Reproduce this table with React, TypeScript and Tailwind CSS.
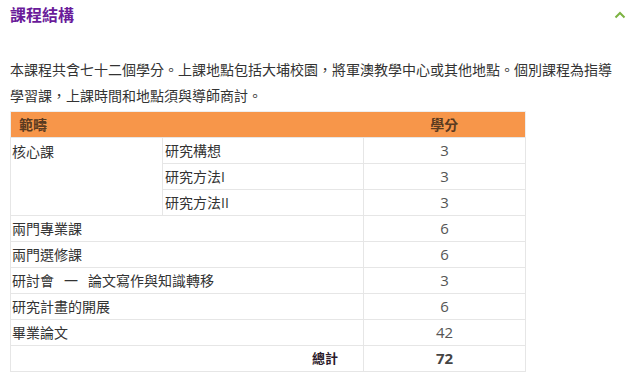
import React from "react";

const font = { fontFamily: '"Open Sans", "Noto Sans CJK TC", sans-serif' };

export default function App() {
  const cell = "border border-[#e6e6e6] h-[26px] p-0 align-middle";
  const num = `${cell} text-center text-[#555] text-[15px]`;
  return (
    <div className="w-[635px] h-[379px] bg-white text-[#333] overflow-hidden" style={font}>
      <div className="h-[30px] flex items-center justify-between pl-[10px] pr-[8px]">
        <h2 className="text-[16px] font-bold text-[#6a1b9a] leading-none">課程結構</h2>
        <svg width="12" height="8" viewBox="0 0 12 8" className="mr-[1px]">
          <path d="M1.5 6.5 L6 2 L10.5 6.5" fill="none" stroke="#7cb342" strokeWidth="2" />
        </svg>
      </div>
      <p className="mt-[27px] pl-[10px] pr-[10px] text-[14px] leading-[26px] text-[#333]">
        本課程共含七十二個學分。上課地點包括大埔校園，將軍澳教學中心或其他地點。個別課程為指導學習課，上課時間和地點須與導師商討。
      </p>
      <table className="ml-[10px] mt-[2px] w-[515px] table-fixed border-collapse text-[14px] border border-[#eeeeee]">
        <colgroup>
          <col className="w-[152px]" />
          <col className="w-[201px]" />
          <col className="w-[162px]" />
        </colgroup>
        <thead>
          <tr className="bg-[#f7964a] h-[26px]">
            <th colSpan={2} className="text-left pl-[8px] font-bold text-[#5a3a20]">範疇</th>
            <th className="text-center font-bold text-[#5a3a20]">學分</th>
          </tr>
        </thead>
        <tbody>
          <tr>
            <td rowSpan={3} className={`${cell} align-top pl-[1px] pt-[3px]`}>核心課</td>
            <td className={`${cell} pl-[2px]`}>研究構想</td>
            <td className={num}>3</td>
          </tr>
          <tr>
            <td className={`${cell} pl-[2px]`}>研究方法I</td>
            <td className={num}>3</td>
          </tr>
          <tr>
            <td className={`${cell} pl-[2px]`}>研究方法II</td>
            <td className={num}>3</td>
          </tr>
          <tr>
            <td colSpan={2} className={`${cell} pl-[1px]`}>兩門專業課</td>
            <td className={num}>6</td>
          </tr>
          <tr>
            <td colSpan={2} className={`${cell} pl-[1px]`}>兩門選修課</td>
            <td className={num}>6</td>
          </tr>
          <tr>
            <td colSpan={2} className={`${cell} pl-[1px]`}>
              研討會<span className="mx-[10px]">一</span>論文寫作與知識轉移
            </td>
            <td className={num}>3</td>
          </tr>
          <tr>
            <td colSpan={2} className={`${cell} pl-[1px]`}>研究計畫的開展</td>
            <td className={num}>6</td>
          </tr>
          <tr>
            <td colSpan={2} className={`${cell} pl-[1px]`}>畢業論文</td>
            <td className={num}>42</td>
          </tr>
          <tr>
            <td colSpan={2} className={`${cell} text-right pr-[25px] font-bold text-[#2a1a2a] text-[13px]`}>總計</td>
            <td className={`${cell} text-center font-bold text-[#444] text-[15px]`}>72</td>
          </tr>
        </tbody>
      </table>
    </div>
  );
}
